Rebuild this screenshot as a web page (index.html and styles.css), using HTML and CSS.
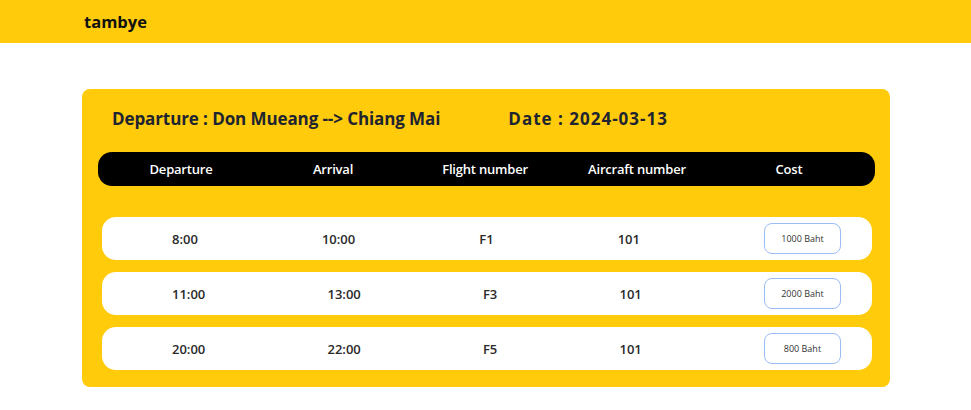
FILE: index.html
```html
<!DOCTYPE html>
<html lang="en">
<head>
<meta charset="utf-8">
<title>tambye</title>
<link rel="stylesheet" href="styles.css">
</head>
<body>
<header class="topbar">
  <div class="brand">tambye</div>
</header>
<main class="page">
  <section class="card">
    <h1 class="title"><span>Departure : Don Mueang --&gt; Chiang Mai</span><span class="date">Date : 2024-03-13</span></h1>
    <div class="thead">
      <div>Departure</div>
      <div>Arrival</div>
      <div>Flight number</div>
      <div>Aircraft number</div>
      <div>Cost</div>
    </div>
    <div class="rows">
      <div class="row">
        <div>8:00</div><div>10:00</div><div>F1</div><div>101</div><button class="cost">1000 Baht</button>
      </div>
      <div class="row">
        <div>11:00</div><div>13:00</div><div>F3</div><div>101</div><button class="cost">2000 Baht</button>
      </div>
      <div class="row">
        <div>20:00</div><div>22:00</div><div>F5</div><div>101</div><button class="cost">800 Baht</button>
      </div>
    </div>
  </section>
</main>
</body>
</html>
```

FILE: styles.css
```css
* { box-sizing: border-box; }
body {
  margin: 0;
  font-family: "Open Sans", "Noto Sans", sans-serif;
  background: #fff;
  color: #222;
}
.topbar {
  height: 43px;
  background: #ffcb0b;
  display: flex;
  align-items: center;
  padding-left: 84px;
}
.brand {
  font-weight: 700;
  font-size: 16.5px;
  color: #111;
}
.page {
  padding: 46px 81px 0 82px;
}
.card {
  background: #ffcb0b;
  border-radius: 8px;
  padding: 16px 15px 16px 16px;
  height: 298px;
}
.title {
  margin: 0;
  padding: 2px 0 0 14px;
  font-size: 17px;
  font-weight: 700;
  color: #1e2430;
  letter-spacing: -0.1px;
  display: flex;
  gap: 68px;
  height: 47px;
}
.date {
  letter-spacing: 1px;
}
.thead {
  background: #000;
  color: #fff;
  border-radius: 14px;
  height: 34px;
  display: grid;
  grid-template-columns: repeat(5, 152px);
  align-items: center;
  font-size: 13px;
  font-weight: 600;
  letter-spacing: -0.2px;
  padding-left: 7px;
}
.thead > div { text-align: center; }
.rows {
  margin: 31px 3px 0 4px;
  display: flex;
  flex-direction: column;
  gap: 12px;
}
.row {
  background: #fff;
  border-radius: 14px;
  height: 43px;
  display: flex;
  align-items: center;
  justify-content: space-between;
  padding: 0 31px 0 70px;
  font-size: 13px;
  font-weight: 600;
  color: #2a2a2a;
}
.cost {
  width: 77px;
  height: 31px;
  border: 1px solid #9bbcf7;
  border-radius: 8px;
  background: #fff;
  font-family: "Open Sans", "Noto Sans", sans-serif;
  font-size: 9px;
  color: #333;
  padding: 0;
}
```
